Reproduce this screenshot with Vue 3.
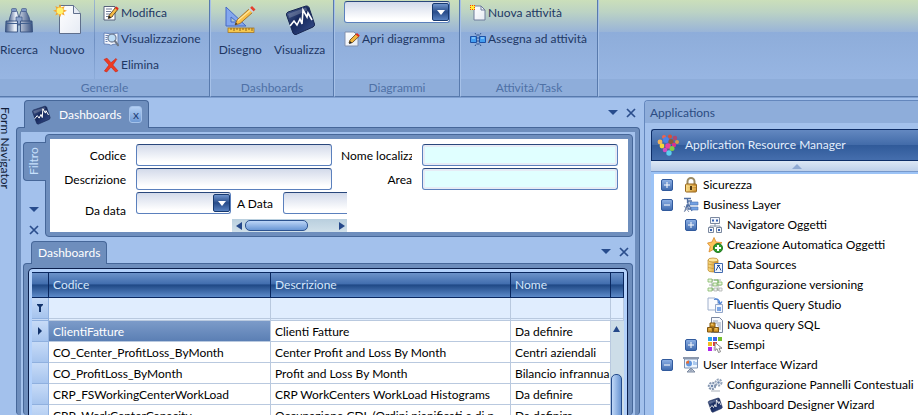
<script setup>
import { ref } from 'vue'

const filterCode = ref('')
const filterDescription = ref('')
const filterName = ref('')
const filterArea = ref('')
const filterTo = ref('')

const rows = [
  { code: 'ClientiFatture', description: 'Clienti Fatture', name: 'Da definire' },
  { code: 'CO_Center_ProfitLoss_ByMonth', description: 'Center Profit and Loss By Month', name: 'Centri aziendali' },
  { code: 'CO_ProfitLoss_ByMonth', description: 'Profit and Loss By Month', name: 'Bilancio infrannuale' },
  { code: 'CRP_FSWorkingCenterWorkLoad', description: 'CRP WorkCenters WorkLoad Histograms', name: 'Da definire' },
  { code: 'CRP_WorkCenterCapacity', description: 'Occupazione CDL (Ordini pianificati e di p', name: 'Da definire' },
]

const tree = [
  { label: 'Sicurezza', icon: 'lock', level: 1, toggle: 'plus' },
  { label: 'Business Layer', icon: 'layer', level: 1, toggle: 'minus' },
  { label: 'Navigatore Oggetti', icon: 'objects', level: 2, toggle: 'plus' },
  { label: 'Creazione Automatica Oggetti', icon: 'star', level: 2 },
  { label: 'Data Sources', icon: 'database', level: 2 },
  { label: 'Configurazione versioning', icon: 'version', level: 2 },
  { label: 'Fluentis Query Studio', icon: 'query', level: 2 },
  { label: 'Nuova query SQL', icon: 'sql', level: 2 },
  { label: 'Esempi', icon: 'samples', level: 2, toggle: 'plus' },
  { label: 'User Interface Wizard', icon: 'board', level: 1, toggle: 'minus' },
  { label: 'Configurazione Pannelli Contestuali', icon: 'gears', level: 2 },
  { label: 'Dashboard Designer Wizard', icon: 'chart', level: 2 },
]
</script>

<template>
  <div class="app">
    <svg class="sprite" aria-hidden="true">
      <defs>
        <linearGradient id="metal" x1="0" x2="1" y1="0" y2="0">
          <stop offset="0" stop-color="#3d5685" /><stop offset=".35" stop-color="#eef4fc" /><stop offset="1" stop-color="#37507f" />
        </linearGradient>
        <linearGradient id="paper" x1="0" x2="1" y1="0" y2="1">
          <stop offset="0" stop-color="#ffffff" /><stop offset="1" stop-color="#e6ebf4" />
        </linearGradient>
        <linearGradient id="navy" x1="0" x2="1" y1="0" y2="1">
          <stop offset="0" stop-color="#53699b" /><stop offset=".45" stop-color="#15275a" /><stop offset="1" stop-color="#3a5290" />
        </linearGradient>
        <linearGradient id="gold" x1="0" x2="1" y1="0" y2="0">
          <stop offset="0" stop-color="#fbe08a" /><stop offset="1" stop-color="#c8892a" />
        </linearGradient>
        <linearGradient id="expander" x1="0" x2="0" y1="0" y2="1">
          <stop offset="0" stop-color="#8fb2e6" /><stop offset="1" stop-color="#3c68ad" />
        </linearGradient>
      </defs>
      <symbol id="i-binoculars" viewBox="0 0 32 32">
        <path d="M9 7h5l2 7v7H5l2-8zM18 7h5l3 6 2 8H16v-7z" fill="url(#metal)" stroke="#3a5384" stroke-width=".8" />
        <path d="M13 13h6v7h-6z" fill="#8ba3cb" stroke="#3a5384" stroke-width=".7" />
        <rect x="8.500" y="4.500" width="5" height="3" rx="1" fill="#7e97c3" stroke="#3a5384" stroke-width=".6" />
        <rect x="18.500" y="4.500" width="5" height="3" rx="1" fill="#7e97c3" stroke="#3a5384" stroke-width=".6" />
        <path d="M3 17h11.500v11H2.500zM17.500 17H29l.5 11h-12z" fill="url(#metal)" stroke="#35507f" stroke-width=".9" />
        <path d="M3 19.500h11.500M17.500 19.500H29" stroke="#41608f" />
      </symbol>
      <symbol id="i-new" viewBox="0 0 32 32">
        <path d="M8.500 1.500h14l7 8v20h-21z" fill="url(#paper)" stroke="#5f6f8c" />
        <path d="M22.500 1.500v8h7" fill="#e3e9f3" stroke="#5f6f8c" />
        <path d="M9 0l1.400 3.500 3.300-1.500-1.300 3.400L16 6.800l-3.500 1.400 1.200 3.300-3.300-1.400L9 13.500l-1.400-3.400-3.300 1.400 1.300-3.300L2 6.800l3.600-1.400L4.300 2l3.300 1.500z" fill="#f5a72c" />
        <circle cx="9" cy="6.800" r="3.400" fill="#fff36b" />
      </symbol>
      <symbol id="i-edit" viewBox="0 0 16 16">
        <path d="M1 1.500h11v13.500H1z" fill="#fff" stroke="#56617a" />
        <path d="M3 4h6M3 6.500h5M3 9h4M3 11.500h7" stroke="#6f7c96" />
        <path d="M6 10.500l6.500-8 2.300 2-6.500 8-3 1z" fill="#f6bc45" stroke="#4b3515" stroke-width=".8" />
        <path d="M12 3l1.300-1.600 2.400 1.800-1.400 2z" fill="#e02a20" />
        <path d="M6 10.500L5.300 13.500l3-1z" fill="#222" />
      </symbol>
      <symbol id="i-preview" viewBox="0 0 16 16">
        <path d="M1 2l5 .6L8 3.400l2-.8L15 2v11l-5 .4-2 1-2-1-5-.4z" fill="#f4f7fd" stroke="#6b86b8" />
        <path d="M2.500 4.500h3M2.500 6.500h2M2.500 8.500h2M2.500 10.500h2" stroke="#6b86b8" />
        <circle cx="9" cy="7" r="4" fill="#bcdcf5" stroke="#75839c" stroke-width="1.300" />
        <path d="M12 10.200l3 4" stroke="#6f7885" stroke-width="2.200" stroke-linecap="round" />
      </symbol>
      <symbol id="i-delete" viewBox="0 0 16 16">
        <path d="M1 2.500L4 1.200l4 4.500 5-4.200.8.800L9.800 8l5.200 5.800-2.400 1.200L8 10l-4.300 5L1.400 14 6 8z" fill="#ef3b22" stroke="#c9200f" stroke-width=".6" />
      </symbol>
      <symbol id="i-design" viewBox="0 0 32 32">
        <path d="M2 3v19h20zM7 13v5h6z" fill="#84a7ee" fill-rule="evenodd" stroke="#4469c7" />
        <rect x="4" y="24" width="26" height="4.500" fill="#f7c84c" stroke="#9c6b19" stroke-width=".7" />
        <path d="M7 24v2M10 24v3M13 24v2M16 24v3M19 24v2M22 24v3M25 24v2M28 24v3" stroke="#8f6217" />
        <path d="M11 21l2-5L25 5l3.500 3.500L16 19.500z" fill="#f8bf47" stroke="#946018" stroke-width=".8" />
        <path d="M14 16.500L26.500 6" stroke="#ffe69c" stroke-width="1.200" />
        <path d="M26 4l2-2 3.500 3.500-2 2z" fill="#e5402c" /><path d="M24.500 5l1.500-1 3.500 3.500-1 1.500z" fill="#cfd5de" />
        <path d="M11 21l.8-2.500 1.700 1.500z" fill="#333" />
      </symbol>
      <symbol id="i-chart" viewBox="0 0 32 32">
        <path d="M2.500 11Q2 9 4 8L22 2q2-.5 3 1.500L30.500 20q.5 2-1.500 3l-17 7.500q-2 .5-3-1.500z" fill="url(#navy)" stroke="#172651" />
        <path d="M6 22l4-5 3 4 3-6 2 5 1-14 4 7 1-4 4 7" fill="none" stroke="#fff" stroke-width="1.600" />
        <path d="M4 10l18-6.500 1.500 3L5.500 14z" fill="#fff" opacity=".2" />
      </symbol>
      <symbol id="i-diagram" viewBox="0 0 16 16">
        <path d="M1 1h9l4 4v10H1z" fill="url(#paper)" stroke="#8190ae" />
        <path d="M5 12l1-3 6-6 2.800 2.500-6.300 6z" fill="#f3b63e" stroke="#5a3d13" stroke-width=".8" />
        <path d="M11.500 3.500L13 2l2.800 2.400-1.300 1.500z" fill="#df3024" /><path d="M5 13l1-3 2 2z" fill="#222" />
      </symbol>
      <symbol id="i-activity" viewBox="0 0 16 16">
        <path d="M4 1h7l4 4v10H4z" fill="url(#paper)" stroke="#6e7d9b" /><path d="M11 1v4h4" fill="none" stroke="#6e7d9b" />
        <path d="M0 0h5v5H0z" fill="#ffed39" />
        <path d="M0 0h1v1H0zM2 0h1v1H2zM4 0h1v1H4zM0 2h1v1H0zM4 2h1v1H4zM0 4h1v1H0zM2 4h1v1H2zM4 4h1v1H4z" fill="#ee3d16" />
      </symbol>
      <symbol id="i-assign" viewBox="0 0 16 16">
        <path d="M.5 5.500h6v6h-6zM9.500 5.500h6v6h-6z" fill="#439df0" stroke="#1c50a5" />
        <path d="M2 7h3M11 7h3" stroke="#b7e3ff" /><path d="M8 3v11M5 2l2 3M11 2L9 5M5 15l2-3M11 15l-2-3" stroke="#31518c" stroke-dasharray="2 1" />
      </symbol>
      <symbol id="i-lock" viewBox="0 0 16 16">
        <path d="M4.500 8V4.500a3.500 3.500 0 0 1 7 0V8" fill="none" stroke="#9a8a64" stroke-width="2" />
        <rect x="2.500" y="7" width="11" height="8" rx="1" fill="url(#gold)" stroke="#96651c" /><path d="M3 9.500h10M3 12h10" stroke="#f9d98a" stroke-width=".6" />
        <path d="M8 9v4" stroke="#513911" stroke-width="2" />
      </symbol>
      <symbol id="i-layer" viewBox="0 0 16 16">
        <path d="M1 1.500h7M4.500 2v4M2 14l2-6h2l3 6M9 4H5v8h4" fill="none" stroke="#5270a3" stroke-width="1.300" />
        <path d="M7 5h8v3H7zM8 10h7v3H8z" fill="#73a1e3" stroke="#4a72b3" stroke-width=".6" /><path d="M1 9l5 6M1 15l4-5" stroke="#8f9cb5" />
      </symbol>
      <symbol id="i-objects" viewBox="0 0 16 16">
        <path d="M8 6v4M3 11V9h10v2" fill="none" stroke="#8896ac" />
        <path d="M3.500.5h9v6h-9zM1.500 10.500h5v5h-5zM9.500 10.500h5v5h-5z" fill="#f4f7fc" stroke="#7b889f" />
        <path d="M5 3.500h2M9 3.500h2M3 13h2M11 13h2" stroke="#3661b0" stroke-width="2" />
      </symbol>
      <symbol id="i-star" viewBox="0 0 16 16">
        <path d="M7 .5L9 5l6 .6-4.200 4L12 15l-5-3-5 3 1.200-5.400L.5 6 5 5z" fill="#fdc45b" stroke="#d9892b" stroke-width=".8" />
        <circle cx="11" cy="11" r="4.600" fill="#2e9e2a" stroke="#176818" stroke-width=".8" /><path d="M8 11h6M11 8v6" stroke="#fff" stroke-width="2" />
      </symbol>
      <symbol id="i-database" viewBox="0 0 16 16">
        <path d="M1 3v10q0 2 5 2t5-2V3z" fill="url(#gold)" stroke="#b78323" stroke-width=".7" /><ellipse cx="6" cy="3" rx="5" ry="2" fill="#ffe79e" stroke="#b78323" stroke-width=".7" />
        <path d="M1 7q5 2 10 0M1 10.500q5 2 10 0" fill="none" stroke="#c5922e" stroke-width=".7" />
        <path d="M7.500 6.500h8v9h-8z" fill="#f2f7ff" stroke="#426bb0" /><path d="M9 13.500l2-4h1l2 4M10 8.500h3" fill="none" stroke="#264f9a" />
      </symbol>
      <symbol id="i-version" viewBox="0 0 16 16">
        <path d="M2 3h12M2 8h12M2 13h12M5 2v12M11 2v12" stroke="#aab2ae" />
        <path d="M1 2h4v3H1zM11 5h4v3h-4zM6 6h4v3H6zM1 11h4v3H1z" fill="#e8f5dc" stroke="#84b768" stroke-width=".8" /><path d="M7 3h4v3M5 12h6" fill="none" stroke="#73b858" />
        <path d="M7 11h3v3H7zM12 11h3v3h-3z" fill="#f4f4f4" stroke="#aeb3b0" stroke-width=".8" />
      </symbol>
      <symbol id="i-query" viewBox="0 0 16 16">
        <path d="M1 1h7l3 3v9H1z" fill="#fafbfe" stroke="#9fb0cc" /><path d="M7 2.500q5-2 6 4M11 4.500l2 3 2-3" fill="none" stroke="#4f84d6" stroke-width="1.300" />
        <path d="M8.500 7.500h7v8h-7z" fill="#f1f5fc" stroke="#91a5c8" /><rect x="10" y="10" width="4" height="4" fill="#7da7e6" />
      </symbol>
      <symbol id="i-sql" viewBox="0 0 16 16">
        <path d="M4.500.5h8l3 3v12h-11z" fill="#f7f9fd" stroke="#7a87a0" /><path d="M6 4h5M6 6h8M10 8h4M11 10h3M12 12h2" stroke="#92a0b7" />
        <path d="M3 6h5v4H3zM.5 10.500h5v4.500h-5zM6.500 10.500h5v4.500h-5z" fill="#d59a2c" stroke="#805711" /><path d="M5 6.500v1.500M3 11v1.500M9 11v1.500" stroke="#ffe398" />
      </symbol>
      <symbol id="i-samples" viewBox="0 0 16 16">
        <path d="M1 0h4v4H1z" fill="#28a5ea" /><path d="M6 0h4v4H6z" fill="#3c62e7" /><path d="M11 0h4v4h-4z" fill="#75be2a" />
        <path d="M1 5h4v4H1z" fill="#f5b921" /><path d="M6 5h4v4H6z" fill="#e63935" /><path d="M1 10h4v4H1z" fill="#b025ec" /><path d="M6 10h3v4H6z" fill="#ead8f5" />
        <path d="M8 5.500v8l2-1.800 1.500 3.800 2-.8L12 11.200h3z" fill="#fff" stroke="#777" stroke-width=".9" />
      </symbol>
      <symbol id="i-board" viewBox="0 0 16 16">
        <path d="M8 10v4M4 15l4-4 4 4z" fill="#bac5d5" stroke="#7c899f" /><path d="M1.500 2h13v9h-13z" fill="#eef5fd" stroke="#7d93b5" /><path d="M0 1h16" stroke="#8b98ad" stroke-width="2" />
        <circle cx="6" cy="6.500" r="3" fill="#6297df" /><path d="M6 6.500v-3a3 3 0 0 0-3 3z" fill="#ed6d2c" /><path d="M11 4v4M13 5v3" stroke="#6a9edf" />
      </symbol>
      <symbol id="i-gears" viewBox="0 0 16 16">
        <circle cx="5" cy="9" r="3.200" fill="#e4ebf4" stroke="#8495af" stroke-width="2" stroke-dasharray="2 1" /><circle cx="11.500" cy="5.500" r="3" fill="#eef3f9" stroke="#94a3b9" stroke-width="2" stroke-dasharray="2 1" />
        <circle cx="5" cy="9" r="1.200" fill="#7088ac" /><circle cx="11.500" cy="5.500" r="1.200" fill="#7088ac" /><path d="M4 14h9" stroke="#c5cad1" stroke-width="1.500" />
      </symbol>
      <symbol id="i-plus" viewBox="0 0 12 12">
        <rect x=".5" y=".5" width="11" height="11" rx="1.500" fill="url(#expander)" stroke="#315a9d" /><path d="M3 6h6M6 3v6" stroke="#fff" />
      </symbol>
      <symbol id="i-minus" viewBox="0 0 12 12">
        <rect x=".5" y=".5" width="11" height="11" rx="1.500" fill="url(#expander)" stroke="#315a9d" /><path d="M3 6h6" stroke="#fff" />
      </symbol>
      <symbol id="i-apps" viewBox="0 0 22 22">
        <path d="M11 21L6 14l5-3 5 3z" fill="#80618a" opacity=".4" />
        <circle cx="7" cy="3" r="2" fill="#f0634c" /><circle cx="13" cy="2.500" r="2" fill="#da5035" /><circle cx="18" cy="4" r="2.200" fill="#b0486e" />
        <circle cx="3" cy="8" r="2.400" fill="#f6b35c" /><circle cx="9" cy="6" r="3" fill="#4b83ea" /><circle cx="14" cy="7.500" r="2.600" fill="#8e5a38" /><circle cx="20" cy="8" r="2" fill="#d99a4b" />
        <circle cx="5" cy="12" r="2.400" fill="#f6d63c" /><circle cx="11" cy="12" r="2.800" fill="#e8419f" /><circle cx="17" cy="11" r="2.200" fill="#da2f91" /><circle cx="15" cy="14.500" r="2.500" fill="#83cd45" /><circle cx="8" cy="16" r="2.300" fill="#d44cbe" /><circle cx="12" cy="19" r="2.700" fill="#5ccdf0" />
      </symbol>
      <symbol id="i-close" viewBox="0 0 10 10"><path d="M1 1l8 8M9 1L1 9" stroke="#2b4e8c" stroke-width="1.700" /></symbol>
      <symbol id="i-down" viewBox="0 0 10 6"><path d="M0 0h10L5 5z" fill="#274c8d" /></symbol>
      <symbol id="i-left" viewBox="0 0 6 8"><path d="M6 0v8L0 4z" fill="#25488a" /></symbol>
      <symbol id="i-right" viewBox="0 0 6 8"><path d="M0 0v8l6-4z" fill="#25488a" /></symbol>
      <symbol id="i-row" viewBox="0 0 4 8"><path d="M0 0v8l4-4z" fill="#12336b" /></symbol>
      <symbol id="i-up" viewBox="0 0 8 7"><path d="M0 7h8L4 0z" fill="#25488a" /></symbol>
      <symbol id="i-hint" viewBox="0 0 10 5"><path d="M0 5h10L5 0z" fill="#8fa9d3" /></symbol>
      <symbol id="i-white-down" viewBox="0 0 8 5"><path d="M0 0h8L4 5z" fill="#fff" /></symbol>
      <symbol id="i-filter" viewBox="0 0 6 8"><path d="M0 0h6v1L4 3v5H2V3L0 1z" fill="#12336b" /></symbol>
    </svg>

    <header class="ribbon">
      <section class="group general">
        <div class="tools">
          <button class="big first"><svg class="icon-big"><use href="#i-binoculars" /></svg>Ricerca</button>
          <button class="big second"><svg class="icon-big"><use href="#i-new" /></svg>Nuovo</button>
          <div class="commands ruled">
            <button class="small"><svg class="icon"><use href="#i-edit" /></svg>Modifica</button>
            <button class="small"><svg class="icon"><use href="#i-preview" /></svg>Visualizzazione</button>
            <button class="small"><svg class="icon"><use href="#i-delete" /></svg>Elimina</button>
          </div>
        </div>
        <h2 class="caption">Generale</h2>
      </section>
      <section class="group dashboards">
        <div class="tools centered">
          <button class="big"><svg class="icon-big"><use href="#i-design" /></svg>Disegno</button>
          <button class="big"><svg class="icon-big"><use href="#i-chart" /></svg>Visualizza</button>
        </div>
        <h2 class="caption">Dashboards</h2>
      </section>
      <section class="group diagrams">
        <div class="tools">
          <div class="commands inset">
            <div class="combo">
              <select class="field" aria-label="Diagramma"><option></option></select>
              <span class="drop"><svg class="drop-icon"><use href="#i-white-down" /></svg></span>
            </div>
            <button class="small"><svg class="icon"><use href="#i-diagram" /></svg>Apri diagramma</button>
          </div>
        </div>
        <h2 class="caption">Diagrammi</h2>
      </section>
      <section class="group tasks">
        <div class="tools">
          <div class="commands inset">
            <button class="small"><svg class="icon"><use href="#i-activity" /></svg>Nuova attività</button>
            <button class="small"><svg class="icon"><use href="#i-assign" /></svg>Assegna ad attività</button>
          </div>
        </div>
        <h2 class="caption">Attività/Task</h2>
      </section>
      <div class="group rest"><div class="tools"></div><div class="caption"></div></div>
    </header>

    <div class="workspace">
      <aside class="navigator">Form Navigator</aside>

      <main class="document">
        <div class="tab-row">
          <div class="tab doc-tab">
            <svg class="tab-icon"><use href="#i-chart" /></svg>
            <span>Dashboards</span>
            <button class="tab-close" aria-label="Chiudi scheda">x</button>
          </div>
          <div class="pane-tools">
            <button class="bare" aria-label="Elenco schede"><svg class="down-icon"><use href="#i-down" /></svg></button>
            <button class="bare" aria-label="Chiudi"><svg class="close-icon"><use href="#i-close" /></svg></button>
          </div>
        </div>
        <div class="frame doc-frame">
          <div class="doc-body">
            <section class="filter">
              <div class="filter-side">
                <div class="filter-tab">Filtro</div>
                <button class="bare" aria-label="Elenco filtri"><svg class="down-icon"><use href="#i-down" /></svg></button>
                <button class="bare" aria-label="Chiudi filtro"><svg class="close-icon"><use href="#i-close" /></svg></button>
              </div>
              <div class="frame filter-frame">
                <form class="filter-form" @submit.prevent>
                  <div class="form-left">
                    <label for="code">Codice</label>
                    <input id="code" v-model="filterCode" class="field regular">
                    <label for="description">Descrizione</label>
                    <input id="description" v-model="filterDescription" class="field regular">
                    <label for="from" class="low">Da data</label>
                    <div class="dates">
                      <div class="combo date">
                        <select id="from" class="field"><option></option></select>
                        <span class="drop"><svg class="drop-icon"><use href="#i-white-down" /></svg></span>
                      </div>
                      <label for="to">A Data</label>
                      <input id="to" v-model="filterTo" class="field to-date">
                    </div>
                    <div class="hscroll">
                      <svg class="side-icon"><use href="#i-left" /></svg>
                      <span class="hthumb"></span>
                      <svg class="side-icon push"><use href="#i-right" /></svg>
                    </div>
                  </div>
                  <div class="form-right">
                    <label for="name">Nome localizzato</label>
                    <input id="name" v-model="filterName" class="field aqua">
                    <label for="area" class="end">Area</label>
                    <input id="area" v-model="filterArea" class="field aqua">
                  </div>
                </form>
              </div>
            </section>

            <section class="results">
              <div class="tab-row grid-tabs">
                <div class="tab grid-tab">Dashboards</div>
                <div class="pane-tools">
                  <button class="bare" aria-label="Elenco griglie"><svg class="down-icon"><use href="#i-down" /></svg></button>
                  <button class="bare" aria-label="Chiudi griglia"><svg class="close-icon"><use href="#i-close" /></svg></button>
                </div>
              </div>
              <div class="frame results-frame">
                <div class="grid-box">
                  <table>
                    <colgroup><col class="c-mark"><col class="c-code"><col class="c-desc"><col><col class="c-scroll"></colgroup>
                    <thead>
                      <tr class="head"><th></th><th>Codice</th><th>Descrizione</th><th>Nome</th><th></th></tr>
                      <tr class="filter-row"><td class="mark"><svg class="filter-icon"><use href="#i-filter" /></svg></td><td></td><td></td><td></td><td></td></tr>
                    </thead>
                    <tbody>
                      <tr v-for="(row, index) in rows" :key="row.code" :class="{ selected: index === 0 }">
                        <td class="mark"><svg v-if="index === 0" class="row-icon"><use href="#i-row" /></svg></td>
                        <td class="code">{{ row.code }}</td>
                        <td>{{ row.description }}</td>
                        <td>{{ row.name }}</td>
                        <td v-if="index === 0" class="vscroll" :rowspan="rows.length">
                          <div class="vtrack"><svg class="up-icon"><use href="#i-up" /></svg><span class="vthumb"></span></div>
                        </td>
                      </tr>
                    </tbody>
                  </table>
                </div>
              </div>
            </section>
          </div>
        </div>
      </main>

      <aside class="applications">
        <h2 class="app-title">Applications</h2>
        <div class="app-body">
          <div class="manager"><svg class="apps-icon"><use href="#i-apps" /></svg>Application Resource Manager</div>
          <div class="scroll-up"><svg class="hint-icon"><use href="#i-hint" /></svg></div>
          <ul class="tree">
            <li v-for="node in tree" :key="node.label" :class="['node', 'level-' + node.level]">
              <button v-if="node.toggle" class="bare expander" :aria-label="node.label"><svg class="expander-icon"><use :href="'#i-' + node.toggle" /></svg></button>
              <span v-else class="expander"></span>
              <svg class="icon"><use :href="'#i-' + node.icon" /></svg>
              <span>{{ node.label }}</span>
            </li>
          </ul>
        </div>
      </aside>
    </div>
  </div>
</template>

<style>
body {
  overflow: hidden;
}
</style>

<style scoped>
* {
  box-sizing: border-box;
}

.app {
  display: flex;
  flex-direction: column;
  height: 100vh;
  overflow: hidden;
  background: #a3c1ec;
  color: #000;
  font: 12px/16px Lato, "Noto Sans", sans-serif;
}

.sprite {
  position: absolute;
  width: 0;
  height: 0;
}

svg {
  display: block;
  flex: none;
}

button {
  border: 0;
  padding: 0;
  background: none;
  color: inherit;
  font: inherit;
}

h2 {
  margin: 0;
  font: inherit;
}

.icon { width: 16px; height: 16px; }
.icon-big { width: 32px; height: 32px; }
.down-icon { width: 10px; height: 6px; }
.close-icon { width: 10px; height: 10px; }
.drop-icon { width: 8px; height: 5px; }
.side-icon { width: 6px; height: 8px; }

/* Ribbon */
.ribbon {
  display: flex;
  flex: none;
  border-bottom: 1px solid #7f9fd0;
}

.group {
  flex: none;
  border-right: 1px solid #587aad;
  border-bottom: 1px solid #587aad;
  border-left: 1px solid #a6c1e8;
}

.general { width: 210px; border-left: 0; }
.dashboards { width: 124px; }
.diagrams { width: 126px; }
.tasks { width: 138px; }
.rest { flex: 1; border-right: 0; }

.tools {
  display: flex;
  height: 79px;
  background: linear-gradient(#cbdfba 0, #bcd3c4 12px, #99b4d8 32px, #8eadda 32px, #97b5e2 100%);
}

.centered {
  justify-content: center;
  gap: 12px;
}

.caption {
  height: 17px;
  background: #8eadda;
  color: #4f71a6;
  line-height: 18px;
  text-align: center;
}

.big {
  display: flex;
  flex-direction: column;
  align-items: center;
  gap: 6px;
  padding-top: 4px;
  color: #1e3764;
}

.first { width: 38px; }
.second { width: 54px; padding-left: 4px; }

.commands {
  display: flex;
  flex-direction: column;
}

.ruled {
  margin-left: 2px;
  padding-left: 8px;
  border-left: 1px solid;
  border-image: linear-gradient(#9fb9cf, #6e8fc2, #8eadda) 1;
}

.inset {
  padding-left: 9px;
}

.small {
  display: flex;
  align-items: center;
  gap: 2px;
  height: 26px;
  color: #1e3764;
  white-space: nowrap;
}

/* Fields */
.field {
  width: 100%;
  height: 22px;
  padding: 0 4px;
  border: 1px solid #5b80bd;
  border-top-color: #29477c;
  border-radius: 3px;
  background: linear-gradient(#d3daea, #fff 85%);
  font: inherit;
  outline: 0;
  appearance: none;
}

.aqua {
  background: #e0ffff;
  box-shadow: inset 0 0 0 2px #e6ebf5;
}

.combo {
  display: grid;
  grid-template-columns: 1fr 17px 1px;
  width: 106px;
  height: 25px;
  margin-top: 1px;
}

.combo .field {
  grid-area: 1 / 1 / 2 / 4;
}

.combo .drop {
  grid-area: 1 / 2 / 2 / 3;
}

.drop {
  display: flex;
  align-items: center;
  justify-content: center;
  height: 18px;
  margin-top: 2px;
  border: 1px solid #17396f;
  border-radius: 2px;
  background: linear-gradient(#6f93cc, #274b89 50%, #5881c0);
  pointer-events: none;
}

/* Workspace */
.workspace {
  display: flex;
  flex: 1;
  min-height: 0;
}

.navigator {
  width: 16px;
  flex: none;
  padding: 9px 6px 0 0;
  writing-mode: vertical-rl;
  line-height: 10px;
  color: #101c38;
}

.document {
  display: flex;
  flex: 1;
  flex-direction: column;
  min-width: 0;
  padding-top: 2px;
}

.tab-row {
  display: flex;
  align-items: flex-start;
  justify-content: space-between;
  flex: none;
  margin-bottom: -1px;
  padding: 0 4px 0 8px;
}

.tab {
  display: flex;
  align-items: center;
  position: relative;
  border: 1px solid #466799;
  border-bottom: 0;
  border-radius: 4px 4px 0 0;
  background: #6e8ebd;
  color: #fff;
}

.doc-tab {
  gap: 8px;
  height: 28px;
  padding: 0 6px;
}

.tab-icon { width: 20px; height: 20px; }

.tab-close {
  width: 13px;
  height: 17px;
  border: 1px solid #a4c2ea;
  border-radius: 3px;
  background: linear-gradient(#b4d0f4, #6f9ad5);
  color: #1e3e76;
  line-height: 14px;
}

.pane-tools {
  display: flex;
  align-items: center;
  gap: 8px;
  height: 26px;
}

.bare {
  display: flex;
  align-items: center;
  justify-content: center;
}

.frame {
  padding: 4px;
  border: 1px solid #466799;
  border-radius: 4px;
  background: #6e8ebd;
}

.doc-frame {
  flex: 1;
  min-height: 0;
  padding-bottom: 0;
  border-bottom: 0;
}

.doc-body {
  display: flex;
  flex-direction: column;
  height: 100%;
  padding: 2px 2px 0;
  background: #a3c1ec;
  overflow: hidden;
}

.filter {
  display: flex;
  flex: none;
}

.filter-side {
  display: flex;
  flex-direction: column;
  align-items: center;
  gap: 12px;
  width: 22px;
  flex: none;
  padding-top: 8px;
}

/* Rotated half a turn so the label reads upwards; its open side faces the panel */
.filter-tab {
  position: relative;
  width: 23px;
  height: 39px;
  margin: 0 -1px 14px 0;
  border: 1px solid #466799;
  border-left: 0;
  border-radius: 0 4px 4px 0;
  background: #6e8ebd;
  color: #c8e0fc;
  line-height: 20px;
  text-align: center;
  writing-mode: vertical-rl;
  transform: rotate(180deg);
}

.filter-frame {
  flex: 1;
  min-width: 0;
}

.filter-form {
  display: flex;
  justify-content: space-between;
  height: 93px;
  padding: 5px 10px 0 0;
  background: #fff;
}

.filter-form label {
  padding-top: 2px;
}

.form-left {
  display: grid;
  grid-template-columns: 76px 211px;
  grid-template-rows: 22px 22px 22px 16px;
  gap: 2px 10px;
  align-content: start;
  align-items: center;
  flex: none;
}

.form-left > label {
  text-align: right;
}

.form-left > .low {
  padding-top: 16px;
}

.regular {
  width: 196px;
}

.dates {
  display: flex;
  align-items: center;
  gap: 6px;
  overflow: hidden;
}

.dates label {
  width: 40px;
  flex: none;
}

.date {
  width: 95px;
  height: 22px;
  flex: none;
  margin-top: 0;
}

.to-date {
  width: 196px;
  flex: none;
}

.hscroll {
  display: flex;
  align-items: center;
  align-self: end;
  gap: 3px;
  grid-column: 2;
  width: 115px;
  height: 13px;
  margin-left: auto;
  padding: 0 2px 0 4px;
  background: linear-gradient(#b9cfde, #d0e0ea);
}

.hthumb {
  width: 63px;
  height: 11px;
  border: 1px solid #2c528f;
  border-radius: 5px;
  background: linear-gradient(#bcd5f7, #6a97d5);
}

.push {
  margin-left: auto;
}

.form-right {
  display: grid;
  grid-template-columns: 71px 196px;
  grid-auto-rows: 22px;
  gap: 2px 10px;
  align-content: start;
  align-items: center;
  margin-left: -6px;
}

.form-right label {
  overflow: hidden;
  white-space: nowrap;
}

.form-right .end {
  text-align: right;
}

.results {
  display: flex;
  flex: 1;
  flex-direction: column;
  min-height: 0;
  margin-top: 4px;
}

.grid-tab {
  height: 23px;
  padding: 0 6px;
}

.grid-tabs .pane-tools {
  height: 22px;
}

.results-frame {
  flex: 1;
  min-height: 0;
  padding-bottom: 0;
  border-bottom: 0;
}

.grid-box {
  height: 100%;
  padding: 3px 3px 0;
  border: 1px solid #0b1f4c;
  border-bottom: 0;
  border-radius: 5px 5px 0 0;
  background: #b3d1fb;
  overflow: hidden;
}

table {
  width: 100%;
  border-spacing: 0;
  table-layout: fixed;
  background: #fff;
}

.c-mark { width: 17px; }
.c-code { width: 222px; }
.c-desc { width: 240px; }
.c-scroll { width: 13px; }

th {
  height: 26px;
  padding: 0 4px;
  border: solid #09275f;
  border-width: 1px 1px 1px 0;
  background: linear-gradient(#6c92c9, #426eae 45%, #1f4885 50%, #5d8ac9);
  color: #d5e7fc;
  font-weight: 400;
  text-align: left;
}

td {
  height: 21px;
  padding: 1px 0 0 4px;
  border: solid #b9c9df;
  border-width: 0 1px 1px 0;
  overflow: hidden;
  white-space: nowrap;
}

.filter-row td {
  height: 23px;
  border-bottom: 3px double #b9c9df;
  background: #e0edfe;
}

.mark,
.filter-row .mark {
  padding: 0;
  border-color: #8fb0df;
  background: linear-gradient(#c7dbf7, #a6c4ee);
}

.mark svg {
  margin: 0 auto;
}

.filter-icon { width: 6px; height: 8px; }
.row-icon { width: 4px; height: 8px; }
.up-icon { width: 7px; height: 8px; margin: 4px 0 0 2px; }

.selected .code {
  background: linear-gradient(#7c9bc9, #5b7fb4);
  color: #fff;
}

.vscroll {
  height: 100%;
  padding: 0;
  border: 0;
  background: #cddde8;
  vertical-align: top;
}

.vtrack {
  display: flex;
  flex-direction: column;
  height: 105px;
}

.vthumb {
  flex: 1;
  width: 11px;
  margin-top: 41px;
  border: 1px solid #244b8b;
  border-radius: 5px 5px 0 0;
  background: linear-gradient(90deg, #c0d8f8, #6894d2);
}

/* Applications */
.applications {
  display: flex;
  flex-direction: column;
  width: 274px;
  flex: none;
  margin: 2px 0 0 4px;
  border: solid #6487bd;
  border-width: 1px 0 0 1px;
  border-radius: 4px 0 0 0;
  overflow: hidden;
}

.app-title {
  height: 22px;
  flex: none;
  padding: 4px 5px 0;
  background: #8eadda;
  color: #2b4c83;
}

.app-body {
  display: flex;
  flex: 1;
  flex-direction: column;
  min-height: 0;
  padding: 6px 0 0 6px;
}

.manager {
  display: flex;
  align-items: center;
  gap: 6px;
  height: 32px;
  flex: none;
  padding-left: 5px;
  border: solid #0d2d67;
  border-width: 1px 0 1px 1px;
  border-radius: 3px 0 0 0;
  background: linear-gradient(#6388c0, #426ba9 50%, #305a99 50%, #456ead);
  color: #e4effd;
}

.apps-icon { width: 22px; height: 22px; }

.scroll-up {
  display: flex;
  align-items: center;
  justify-content: center;
  height: 11px;
  flex: none;
  padding-left: 24px;
  border-bottom: 1px solid #7799cc;
  background: linear-gradient(#dce7f5, #bed0ea);
}

.hint-icon { width: 10px; height: 5px; }

.tree {
  flex: 1;
  min-height: 0;
  margin: 0;
  padding: 1px 0 0 7px;
  border: solid #9cc3f6;
  border-width: 2px 0 0 3px;
  background: #fff;
  list-style: none;
  overflow: hidden;
}

.node {
  display: flex;
  align-items: center;
  height: 20px;
  white-space: nowrap;
}

.node > .icon {
  margin-right: 4px;
}

.level-2 {
  padding-left: 24px;
}

.expander {
  width: 22px;
  flex: none;
  justify-content: flex-start;
}

.expander-icon { width: 12px; height: 12px; }
</style>
